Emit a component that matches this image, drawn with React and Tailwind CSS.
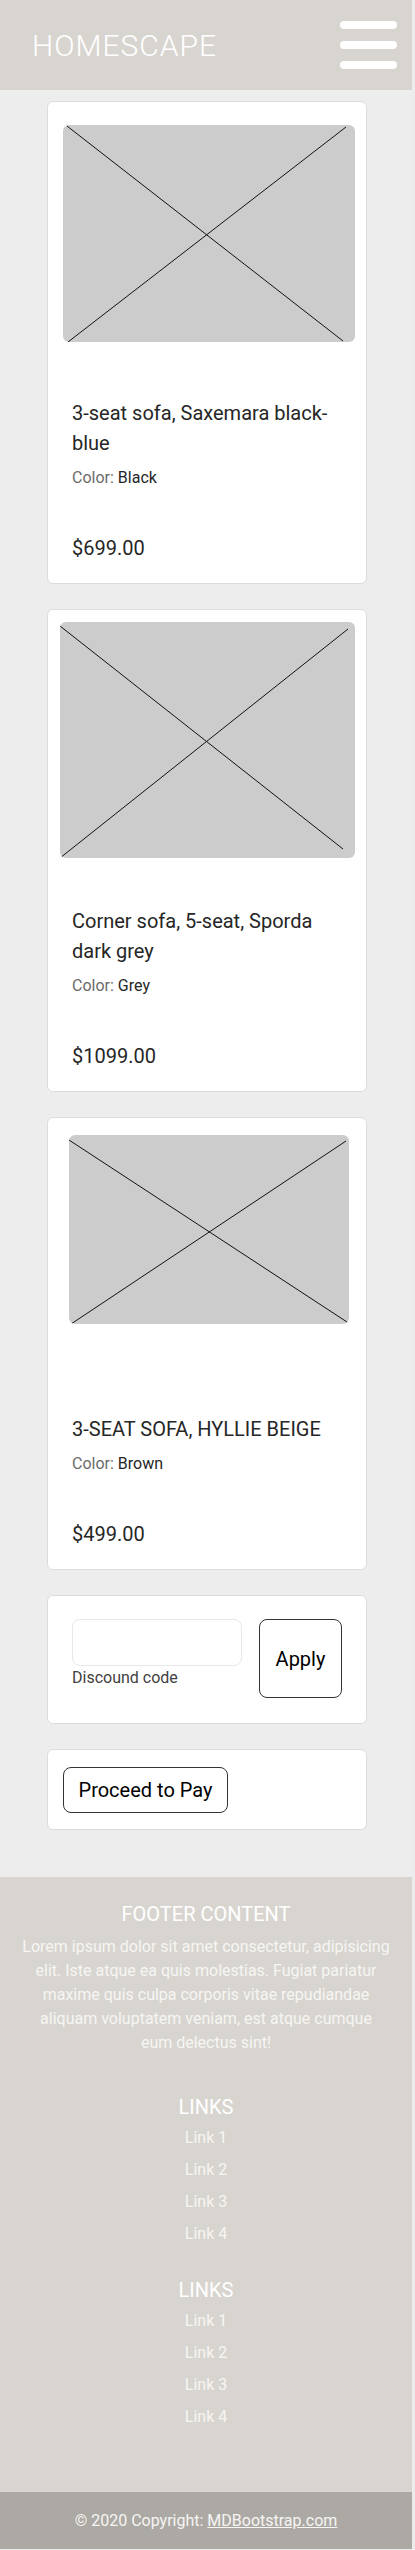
import React from 'react';

const font = { fontFamily: 'Roboto, "Open Sans", sans-serif' };

const products = [
  {
    title: '3-seat sofa, Saxemara black-blue',
    color: 'Black',
    price: '$699.00',
    img: 'mt-[23px] ml-[15px] w-[292px] h-[217px]',
    w: 292,
    h: 217,
    a: [4, 1, 280, 216],
    b: [5, 217, 283, 2],
    titleGap: 'mt-[56px]',
  },
  {
    title: 'Corner sofa, 5-seat, Sporda dark grey',
    color: 'Grey',
    price: '$1099.00',
    img: 'mt-[12px] ml-[12px] w-[295px] h-[236px]',
    w: 295,
    h: 236,
    a: [0, 4, 283, 227],
    b: [0, 236, 288, 7],
    titleGap: 'mt-[48px]',
  },
  {
    title: '3-SEAT SOFA, HYLLIE BEIGE',
    color: 'Brown',
    price: '$499.00',
    img: 'mt-[17px] ml-[21px] w-[280px] h-[189px]',
    w: 280,
    h: 189,
    a: [0, 5, 278, 187],
    b: [2, 189, 277, 6],
    titleGap: 'mt-[90px]',
  },
];

const Placeholder = ({ p }) => (
  <div className={`${p.img} bg-[#cccccc] rounded-[6px] overflow-hidden`}>
    <svg width={p.w} height={p.h} viewBox={`0 0 ${p.w} ${p.h}`} className="block">
      <line x1={p.a[0]} y1={p.a[1]} x2={p.a[2]} y2={p.a[3]} stroke="#111" strokeWidth="1" />
      <line x1={p.b[0]} y1={p.b[1]} x2={p.b[2]} y2={p.b[3]} stroke="#111" strokeWidth="1" />
    </svg>
  </div>
);

const ProductCard = ({ p }) => (
  <div className="bg-white border border-[#dcdcdc] rounded-[6px] flex flex-col">
    <Placeholder p={p} />
    <div className="px-6 pb-[20px] flex flex-col">
      <h5 className={`${p.titleGap} text-[20px] leading-[30px] text-[#262626]`}>{p.title}</h5>
      <p className="mt-2 text-[16px] leading-6">
        <span className="text-[#6b6b6b]">Color: </span>
        <span className="text-[#262626]">{p.color}</span>
      </p>
      <p className="mt-[43px] text-[20px] leading-[30px] text-[#262626]">{p.price}</p>
    </div>
  </div>
);

const LinkList = () => (
  <div className="flex flex-col items-center">
    <h5 className="text-[20px] leading-[30px] text-white">LINKS</h5>
    <ul className="mt-1 flex flex-col gap-2">
      {['Link 1', 'Link 2', 'Link 3', 'Link 4'].map((l) => (
        <li key={l}>
          <a href="#!" className="text-[16px] leading-6 text-[#f6f5f3]">{l}</a>
        </li>
      ))}
    </ul>
  </div>
);

export default function App() {
  return (
    <div className="bg-[#ececec] min-h-screen" style={font}>
      <div className="w-[412px] bg-[#ededed] flex flex-col">
        <header className="h-[90px] bg-[#d8d5d0] flex items-center justify-between pl-8 pr-[15px]">
          <span className="text-[30px] font-light tracking-[1px] text-white">HOMESCAPE</span>
          <button className="flex flex-col gap-3 py-1">
            <span className="block w-[57px] h-2 rounded-full bg-white" />
            <span className="block w-[57px] h-2 rounded-full bg-white" />
            <span className="block w-[57px] h-2 rounded-full bg-white" />
          </button>
        </header>

        <main className="pt-[11px] pl-[47px] pr-[45px] flex flex-col gap-[25px]">
          {products.map((p) => (
            <ProductCard key={p.title} p={p} />
          ))}

          <div className="h-[129px] bg-white border border-[#dcdcdc] rounded-[6px] px-6 pt-[23px] flex gap-[17px]">
            <div className="w-[170px]">
              <input
                type="text"
                className="w-[170px] h-[47px] border border-[#e8e8e8] rounded-[8px] outline-none"
              />
              <label className="block mt-[2px] text-[16px] leading-5 text-[#3f3f3f]">Discound code</label>
            </div>
            <button className="w-[83px] h-[79px] border border-[#333] rounded-[8px] text-[20px] text-black">
              Apply
            </button>
          </div>

          <div className="h-[81px] bg-white border border-[#dcdcdc] rounded-[6px] pl-[15px] flex items-center">
            <button className="w-[165px] h-[46px] border border-[#333] rounded-[8px] text-[20px] text-black">
              Proceed to Pay
            </button>
          </div>
        </main>

        <div className="h-[47px]" />

        <footer className="bg-[#d8d5d0] text-center flex flex-col">
          <div className="pt-[22px] px-3 flex flex-col">
            <h5 className="text-[20px] leading-[30px] text-white uppercase">Footer Content</h5>
            <p className="mt-[6px] text-[16px] leading-6 text-[#f6f5f3]">
              Lorem ipsum dolor sit amet consectetur, adipisicing
              <br />
              elit. Iste atque ea quis molestias. Fugiat pariatur
              <br />
              maxime quis culpa corporis vitae repudiandae
              <br />
              aliquam voluptatem veniam, est atque cumque
              <br />
              eum delectus sint!
            </p>
            <div className="h-[37px]" />
            <LinkList />
            <div className="h-[29px]" />
            <LinkList />
            <div className="h-[63px]" />
          </div>
          <div className="bg-[#aca9a4] h-[57px] flex items-center justify-center text-[16px] text-[#f6f5f3]">
            © 2020 Copyright:&nbsp;<a href="#!" className="underline text-[#f6f5f3]">MDBootstrap.com</a>
          </div>
        </footer>
      </div>
    </div>
  );
}
